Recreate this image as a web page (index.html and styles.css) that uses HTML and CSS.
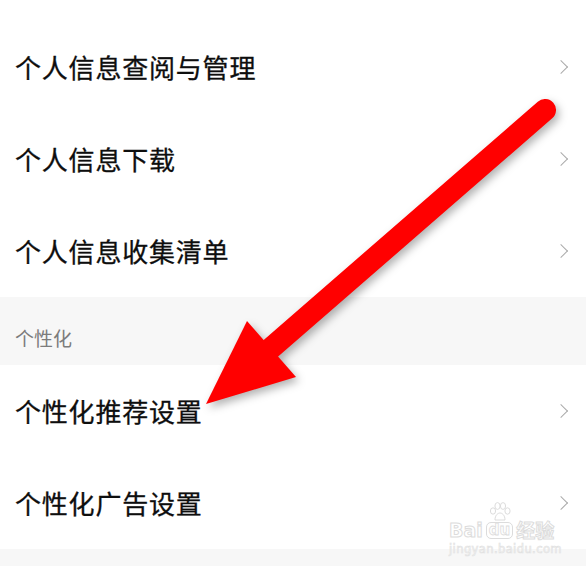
FILE: index.html
```html
<!DOCTYPE html>
<html lang="zh-CN">
<head>
    <meta charset="UTF-8">
    <meta name="viewport" content="width=device-width, initial-scale=1.0">
    <title>隐私设置</title>
    <link rel="stylesheet" href="styles.css">
</head>
<body>
    <div class="page">
        <ul class="group first">
            <li class="item"><span class="label">个人信息查阅与管理</span><span class="chevron"></span></li>
            <li class="item"><span class="label">个人信息下载</span><span class="chevron"></span></li>
            <li class="item"><span class="label">个人信息收集清单</span><span class="chevron"></span></li>
        </ul>
        <div class="section-title">个性化</div>
        <ul class="group">
            <li class="item"><span class="label">个性化推荐设置</span><span class="chevron"></span></li>
            <li class="item"><span class="label">个性化广告设置</span><span class="chevron"></span></li>
        </ul>
        <div class="gap"></div>

        <!-- annotation arrow drawn over the list -->
        <svg class="arrow" width="586" height="566" viewBox="0 0 586 566">
            <line x1="545" y1="110" x2="262" y2="356" stroke="#ff0000" stroke-width="22" stroke-linecap="round"/>
            <polygon points="247,321 206,404 296,377" fill="#ff0000"/>
        </svg>

        <div class="watermark">
            <div class="wm-top">
                <span class="wm-bai">Bai</span>
                <span class="wm-du">
                    <svg class="paw" width="24" height="19" viewBox="0 0 24 19">
                        <ellipse cx="5" cy="9" rx="2.6" ry="3.2" />
                        <ellipse cx="9.5" cy="4" rx="2.6" ry="3.4" />
                        <ellipse cx="15" cy="4" rx="2.6" ry="3.4" />
                        <ellipse cx="19.5" cy="9" rx="2.6" ry="3.2" />
                        <path d="M7 18 C7 13 10 11 12 11 C14 11 17 13 17 18 Z" />
                    </svg>
                    <span class="wm-du-box">du</span>
                </span>
                <span class="wm-jy">经验</span>
            </div>
            <div class="wm-url">jingyan.baidu.com</div>
        </div>
    </div>
</body>
</html>
```

FILE: styles.css
```css
* {
    padding: 0;
    margin: 0;
    box-sizing: border-box;
}
body {
    font-family: "Noto Sans CJK SC", "Noto Sans", sans-serif;
    background: #ffffff;
    overflow: hidden;
}
.page {
    position: relative;
    width: 586px;
    height: 566px;
    overflow: hidden;
    background: #ffffff;
}
.group {
    list-style: none;
    background: #ffffff;
}
.group.first {
    padding-top: 21px;
}
.item {
    height: 92px;
    display: flex;
    align-items: center;
    justify-content: space-between;
    padding: 0 18px 0 15px;
}
.label {
    font-size: 26px;
    letter-spacing: 0.8px;
    color: #0e0e0e;
    line-height: 30px;
    -webkit-text-stroke: 0.3px #0e0e0e;
}
.chevron {
    width: 10px;
    height: 10px;
    border-top: 1.5px solid #ababab;
    border-right: 1.5px solid #ababab;
    transform: rotate(45deg);
    margin-right: 2px;
}
.section-title {
    height: 68px;
    background: #f7f7f7;
    padding: 30px 0 0 15px;
    font-size: 19px;
    line-height: 22px;
    color: #7c7c7c;
}
.gap {
    height: 20px;
    background: #f7f7f7;
}
.arrow {
    position: absolute;
    top: 0;
    left: 0;
    filter: drop-shadow(3px 4px 4px rgba(0, 0, 0, 0.3));
}
.watermark {
    position: absolute;
    left: 449px;
    top: 502px;
    width: 112px;
    color: #ffffff;
    font-family: "DejaVu Sans", sans-serif;
}
.wm-top {
    display: flex;
    align-items: flex-end;
    gap: 3px;
}
.wm-bai {
    font-size: 19px;
    font-weight: bold;
    line-height: 18px;
    -webkit-text-stroke: 1px #dcdcdc;
}
.wm-du {
    display: flex;
    flex-direction: column;
    align-items: center;
}
.paw {
    fill: #ffffff;
    stroke: #dcdcdc;
    stroke-width: 1;
    margin-bottom: 1px;
}
.wm-du-box {
    font-size: 15px;
    font-weight: bold;
    line-height: 14px;
    padding: 0 2px 1px;
    border: 1px solid #dcdcdc;
    border-radius: 5px;
    -webkit-text-stroke: 0.8px #dcdcdc;
}
.wm-jy {
    font-family: "Noto Sans CJK SC", sans-serif;
    font-size: 19px;
    font-weight: bold;
    line-height: 18px;
    -webkit-text-stroke: 1px #dcdcdc;
}
.wm-url {
    margin-top: 4px;
    font-size: 11.5px;
    line-height: 13px;
    letter-spacing: 0.4px;
    -webkit-text-stroke: 0.7px #e2e2e2;
}
```
